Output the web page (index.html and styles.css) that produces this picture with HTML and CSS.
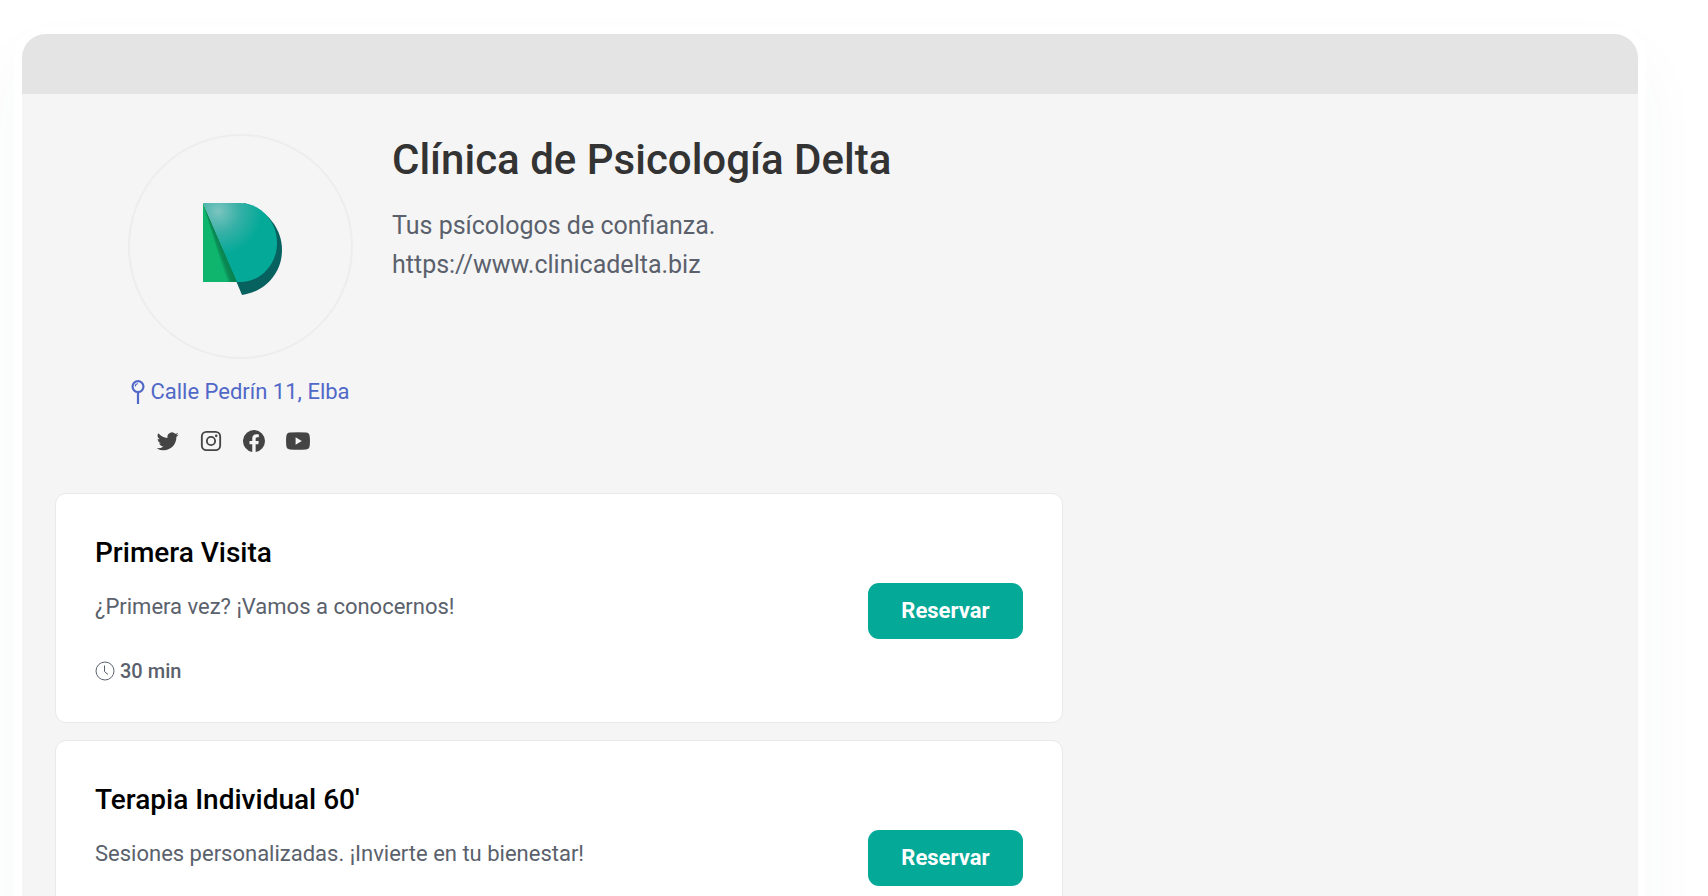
FILE: index.html
```html
<!DOCTYPE html>
<html lang="es">
<head>
  <meta charset="UTF-8" />
  <meta name="viewport" content="width=device-width, initial-scale=1.0"/>
  <title>Clínica de Psicología Delta</title>
  <link rel="stylesheet" href="styles.css">
</head>
<body>
  <div class="window">
    <div class="window-bar"></div>

    <main class="page">
      <header class="profile">
        <div class="profile-side">
          <div class="avatar">
            <svg class="logo" viewBox="-4 2 130 130" role="img" aria-label="Delta">
              <defs>
                <radialGradient id="shine" gradientUnits="userSpaceOnUse" cx="38" cy="31" r="44">
                  <stop offset="0" stop-color="#7cc4c0"/>
                  <stop offset="0.5" stop-color="#36b0a6"/>
                  <stop offset="1" stop-color="#04a998"/>
                </radialGradient>
                <linearGradient id="leaf" gradientUnits="userSpaceOnUse" x1="38" y1="76" x2="52" y2="71">
                  <stop offset="0" stop-color="#0fb56d"/>
                  <stop offset="0.25" stop-color="#0a8a55"/>
                  <stop offset="1" stop-color="#067545"/>
                </linearGradient>
              </defs>
              <path d="M64 23C84 28 102 46 102 70C102 94 84 112 62 115L54 96Z" fill="#07625f"/>
              <path d="M23 23L58 102H23Z" fill="url(#leaf)"/>
              <path d="M23 23L47 102H23Z" fill="#0fb56d"/>
              <path d="M23 23H60C81 23 97 42 97 63C97 84 81 102 60 102H57Z" fill="url(#shine)"/>
            </svg>
          </div>
          <a class="address" href="#">
            <svg class="pin" viewBox="0 0 12 22" aria-hidden="true">
              <circle cx="6" cy="6" r="5" fill="none" stroke="currentColor" stroke-width="2"/>
              <path d="M3.5 6A2.5 2.5 0 0 1 6 3.5" fill="none" stroke="currentColor"/>
              <path d="M6 11V22" stroke="currentColor" stroke-width="2"/>
            </svg>
            Calle Pedrín 11, Elba
          </a>
          <nav class="social">
            <a href="#" aria-label="Twitter">
              <svg viewBox="0 0 24 24"><path d="M23.6 4.9c-.8.4-1.800.7-2.800.8 1-.6 1.800-1.600 2.200-2.700-1 .6-2 1-3.100 1.200a4.900 4.900 0 0 0-8.400 4.500C7.400 8.500 3.800 6.500 1.400 3.600a4.900 4.900 0 0 0 1.500 6.500c-.8 0-1.600-.2-2.200-.6 0 2.400 1.600 4.400 3.900 4.900-.7.200-1.500.2-2.200.1.600 2 2.400 3.400 4.600 3.400A9.900 9.900 0 0 1-.3 19.900a14 14 0 0 0 7.500 2.200c9.100 0 14.300-7.700 13.900-14.600 1-.7 1.800-1.600 2.500-2.600z"/></svg>
            </a>
            <a href="#" aria-label="Instagram">
              <svg viewBox="0 0 24 24">
                <rect x="2" y="2" width="20" height="20" rx="5" fill="none" stroke="currentColor" stroke-width="2"/>
                <circle cx="12" cy="12" r="4.500" fill="none" stroke="currentColor" stroke-width="2"/>
                <circle cx="17.700" cy="6.400" r="1.400"/>
              </svg>
            </a>
            <a href="#" aria-label="Facebook">
              <svg viewBox="0 0 24 24"><path d="M24 12a12 12 0 1 0-13.900 11.900v-8.400h-3V12h3V9.400c0-3 1.800-4.700 4.500-4.700 1.300 0 2.700.2 2.700.2v3h-1.500c-1.500 0-2 .9-2 1.900V12h3.400l-.5 3.500h-2.900v8.400A12 12 0 0 0 24 12z"/></svg>
            </a>
            <a href="#" aria-label="YouTube">
              <svg class="wide" viewBox="0 0 24 18"><path fill-rule="evenodd" d="M4 .5Q12-.2 20 .5Q23.400.8 23.700 4.200Q24.200 9 23.700 13.800Q23.400 17.200 20 17.500Q12 18.200 4 17.500Q.6 17.200.3 13.800Q-.2 9 .3 4.200Q.6.8 4 .5ZM9.600 5.300V12.700L15.800 9Z"/></svg>
            </a>
          </nav>
        </div>

        <div class="profile-info">
          <h1>Clínica de Psicología Delta</h1>
          <p>Tus psícologos de confianza.<br>https://www.clinicadelta.biz</p>
        </div>
      </header>

      <section class="services">
        <article class="card">
          <div>
            <h2>Primera Visita</h2>
            <p class="description">¿Primera vez? ¡Vamos a conocernos!</p>
            <p class="duration">
              <svg viewBox="0 0 20 20" aria-hidden="true"><circle cx="10" cy="10" r="9"/><path d="M9.500 4.500V10.500L13 13.500"/></svg>
              30 min
            </p>
          </div>
          <button type="button">Reservar</button>
        </article>

        <article class="card">
          <div>
            <h2>Terapia Individual 60'</h2>
            <p class="description">Sesiones personalizadas. ¡Invierte en tu bienestar!</p>
          </div>
          <button type="button">Reservar</button>
        </article>
      </section>
    </main>
  </div>
</body>
</html>
```
FILE: styles.css
```css
:root {
  --page-bg: #f5f5f5;
  --bar-bg: #e4e4e4;
  --accent: #04a998;
  --text: #333333;
  --muted: #5a616c;
  --link: #5068c8;
}

* {
  box-sizing: border-box;
}

body {
  margin: 0;
  height: 100vh;
  overflow: hidden;
  padding: 26px 62px 0 14px;
  font-family: Roboto, sans-serif;
  background-color: #ffffff;
  color: var(--text);
}

h1, h2, p {
  margin: 0;
}

.window {
  border: 8px solid #ffffff;
  border-radius: 32px;
  background-color: var(--page-bg);
  overflow: hidden;
  box-shadow: 0 32px 64px rgba(4, 80, 70, 0.04);
}

.window-bar {
  height: 60px;
  background-color: var(--bar-bg);
}

.page {
  padding: 40px 33px;
}

.profile {
  display: flex;
  gap: 39px;
  padding-left: 73px;
}

.profile-side {
  width: 225px;
}

.avatar {
  display: flex;
  align-items: center;
  justify-content: center;
  aspect-ratio: 1;
  border: 2px solid #ededed;
  border-radius: 50%;
}

.logo {
  width: 130px;
}

.address {
  display: flex;
  align-items: center;
  justify-content: center;
  gap: 5px;
  margin-top: 17px;
  font-size: 22px;
  line-height: 32px;
  white-space: nowrap;
  color: var(--link);
  text-decoration: none;
}

.pin {
  width: 14px;
  height: 24px;
}

.social {
  display: flex;
  align-items: center;
  gap: 21px;
  margin-top: 22px;
  padding-left: 29px;
}

.social a {
  display: flex;
  color: #444444;
}

.social svg {
  width: 22px;
  height: 22px;
  fill: currentColor;
}

.social .wide {
  width: 24px;
}

.profile-info h1 {
  font-size: 42px;
  font-weight: 500;
  line-height: 52px;
}

.profile-info p {
  margin-top: 20px;
  font-size: 25px;
  line-height: 39px;
  color: var(--muted);
}

.services {
  display: grid;
  gap: 17px;
  width: 65%;
  margin-top: 41px;
}

.card {
  display: flex;
  justify-content: space-between;
  min-height: 230px;
  padding: 41px 39px 35px;
  border: 1px solid #e9e9e9;
  border-radius: 11px;
  background-color: #ffffff;
}

.card h2 {
  font-size: 28px;
  font-weight: 500;
  line-height: 36px;
  color: #000000;
}

.description {
  margin-top: 20px;
  font-size: 22px;
  line-height: 32px;
  color: var(--muted);
}

.duration {
  display: flex;
  align-items: center;
  gap: 5px;
  margin-top: 32px;
  font-size: 20px;
  font-weight: 500;
  line-height: 32px;
  color: var(--muted);
}

.duration svg {
  width: 20px;
  height: 20px;
  fill: none;
  stroke: currentColor;
}

.card button {
  align-self: center;
  padding: 12px 33px;
  border: none;
  border-radius: 11px;
  font-family: inherit;
  font-size: 22px;
  font-weight: 700;
  line-height: 32px;
  background-color: var(--accent);
  color: #ffffff;
  cursor: pointer;
}
```
